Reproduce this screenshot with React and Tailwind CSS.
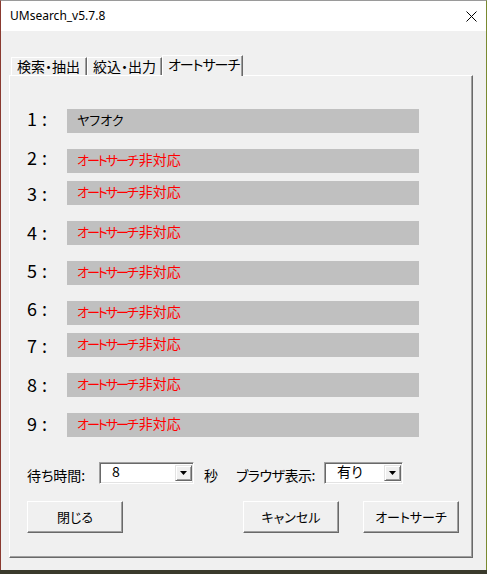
import React from 'react';

const JP = "font-['Noto_Sans_CJK_JP',sans-serif]";
const PALT = "[font-feature-settings:'palt']";

const ROWS = [
  { n: 1, gap: '', lab: '-mt-[3px]' },
  { n: 2, gap: 'mt-[16px]', lab: '-mt-[4px]' },
  { n: 3, gap: 'mt-[8px]', lab: 'mt-0' },
  { n: 4, gap: 'mt-[16px]', lab: '-mt-[1px]' },
  { n: 5, gap: 'mt-[16px]', lab: '-mt-[3px]' },
  { n: 6, gap: 'mt-[16px]', lab: '-mt-[5px]' },
  { n: 7, gap: 'mt-[8px]', lab: 'mt-0' },
  { n: 8, gap: 'mt-[16px]', lab: '-mt-[1px]' },
  { n: 9, gap: 'mt-[16px]', lab: '-mt-[2px]' },
];

function Combo({ value, width }) {
  return (
    <div
      className={`${width} h-[22px] flex items-stretch bg-white border-t border-l border-[#a0a0a0] border-r border-b border-r-white border-b-white shadow-[inset_1px_1px_0_#696969,inset_-1px_-1px_0_#e3e3e3] p-[2px] pr-[1px]`}
    >
      <div className={`flex-1 pl-[10px] text-[14px] leading-[13px] text-black ${PALT}`}>{value}</div>
      <div className="w-[17px] bg-[#f0f0f0] border-t border-l border-[#e3e3e3] border-r border-b border-r-[#696969] border-b-[#696969] shadow-[inset_1px_1px_0_#fff,inset_-1px_-1px_0_#a0a0a0] flex items-center justify-center">
        <svg width="7" height="4" viewBox="0 0 7 4">
          <path d="M0 0h7L3.5 4z" fill="#000" />
        </svg>
      </div>
    </div>
  );
}

function Btn({ children, className = '' }) {
  return (
    <div
      className={`w-[96px] h-[32px] flex items-center justify-center bg-[#f0f0f0] border-t border-l border-white border-r border-b border-r-[#696969] border-b-[#696969] shadow-[inset_-1px_-1px_0_#a0a0a0] text-[13px] text-black ${PALT} ${className}`}
    >
      {children}
    </div>
  );
}

export default function App() {
  return (
    <div className={`w-[487px] h-[574px] bg-[#3a3a2c] ${JP}`}>
      <div className="h-[570px] bg-[#f0f0f0] border-l border-l-[#8a3a30] border-r border-r-[#7a8a30] border-t border-t-[#9a9a9a] flex flex-col">
        {/* title bar */}
        <div className="h-[30px] bg-white flex items-center justify-between pl-[9px] pr-[9px]">
          <span className="font-['Noto_Sans','Liberation_Sans',sans-serif] text-[12px] text-black">UMsearch_v5.7.8</span>
          <svg width="11" height="11" viewBox="0 0 11 11">
            <path d="M0.5 0.5l10 10M10.5 0.5l-10 10" stroke="#000" strokeWidth="1" />
          </svg>
        </div>

        <div className="pl-[8px] pt-[24px]">
          {/* tabs */}
          <div className="flex items-end h-[20px] pl-[2px]">
            <div className={`w-[76px] h-[18px] border-t border-l border-white border-r border-r-[#696969] shadow-[inset_-1px_0_0_#a0a0a0] pl-[5px] text-[14px] leading-[17px] text-black ${PALT}`}>
              検索・抽出
            </div>
            <div className={`w-[75px] h-[18px] border-t border-l border-white border-r border-r-[#696969] shadow-[inset_-1px_0_0_#a0a0a0] pl-[5px] text-[14px] leading-[17px] text-black ${PALT}`}>
              絞込・出力
            </div>
            <div className={`relative z-10 w-[81px] h-[21px] -mb-[1px] bg-[#f0f0f0] border-t border-l border-white border-r border-r-[#696969] shadow-[inset_-1px_0_0_#a0a0a0] pl-[5px] text-[14px] leading-[17px] tracking-[-1px] text-black ${PALT}`}>
              オートサーチ
            </div>
          </div>

          {/* panel */}
          <div className="w-[464px] h-[483px] border-t border-l border-white border-r border-b border-r-[#696969] border-b-[#696969] shadow-[inset_-1px_-1px_0_#a0a0a0] pt-[33px] pl-[17px] flex flex-col">
            {ROWS.map((r) => (
              <div key={r.n} className={`flex items-start h-[24px] ${r.gap}`}>
                <div className={`w-[40px] text-[18px] leading-[24px] text-black ${r.lab}`}>
                  {r.n}
                  <span className="ml-[5px]">:</span>
                </div>
                <div className="w-[352px] h-[24px] bg-[#c0c0c0] pl-[10px] pt-[1px] text-[14px] leading-[18px]">
                  {r.n === 1 ? (
                    <span className={`text-black text-[13px] ${PALT}`}>ヤフオク</span>
                  ) : (
                    <span className="text-[#ff0000]">
                      <span className={`${PALT} text-[13px] tracking-[-2px]`}>オートサーチ</span>
                      <span className="ml-[2px]">非対応</span>
                    </span>
                  )}
                </div>
              </div>
            ))}

            {/* wait / browser */}
            <div className={`flex items-start mt-[25px] h-[22px] text-[14px] text-black ${PALT}`}>
              <div className="w-[72px] leading-[22px] mt-[2px]">待ち時間:</div>
              <Combo value="8" width="w-[95px]" />
              <div className="ml-[10px] w-[32px] leading-[22px] mt-[2px]">秒</div>
              <div className="w-[88px] leading-[22px] mt-[2px] tracking-[-0.5px]">ブラウザ表示:</div>
              <Combo value="有り" width="w-[79px]" />
            </div>

            {/* buttons */}
            <div className="flex mt-[17px]">
              <Btn>閉じる</Btn>
              <Btn className="ml-[120px]">キャンセル</Btn>
              <Btn className="ml-[24px]">オートサーチ</Btn>
            </div>
          </div>
        </div>
      </div>
    </div>
  );
}
